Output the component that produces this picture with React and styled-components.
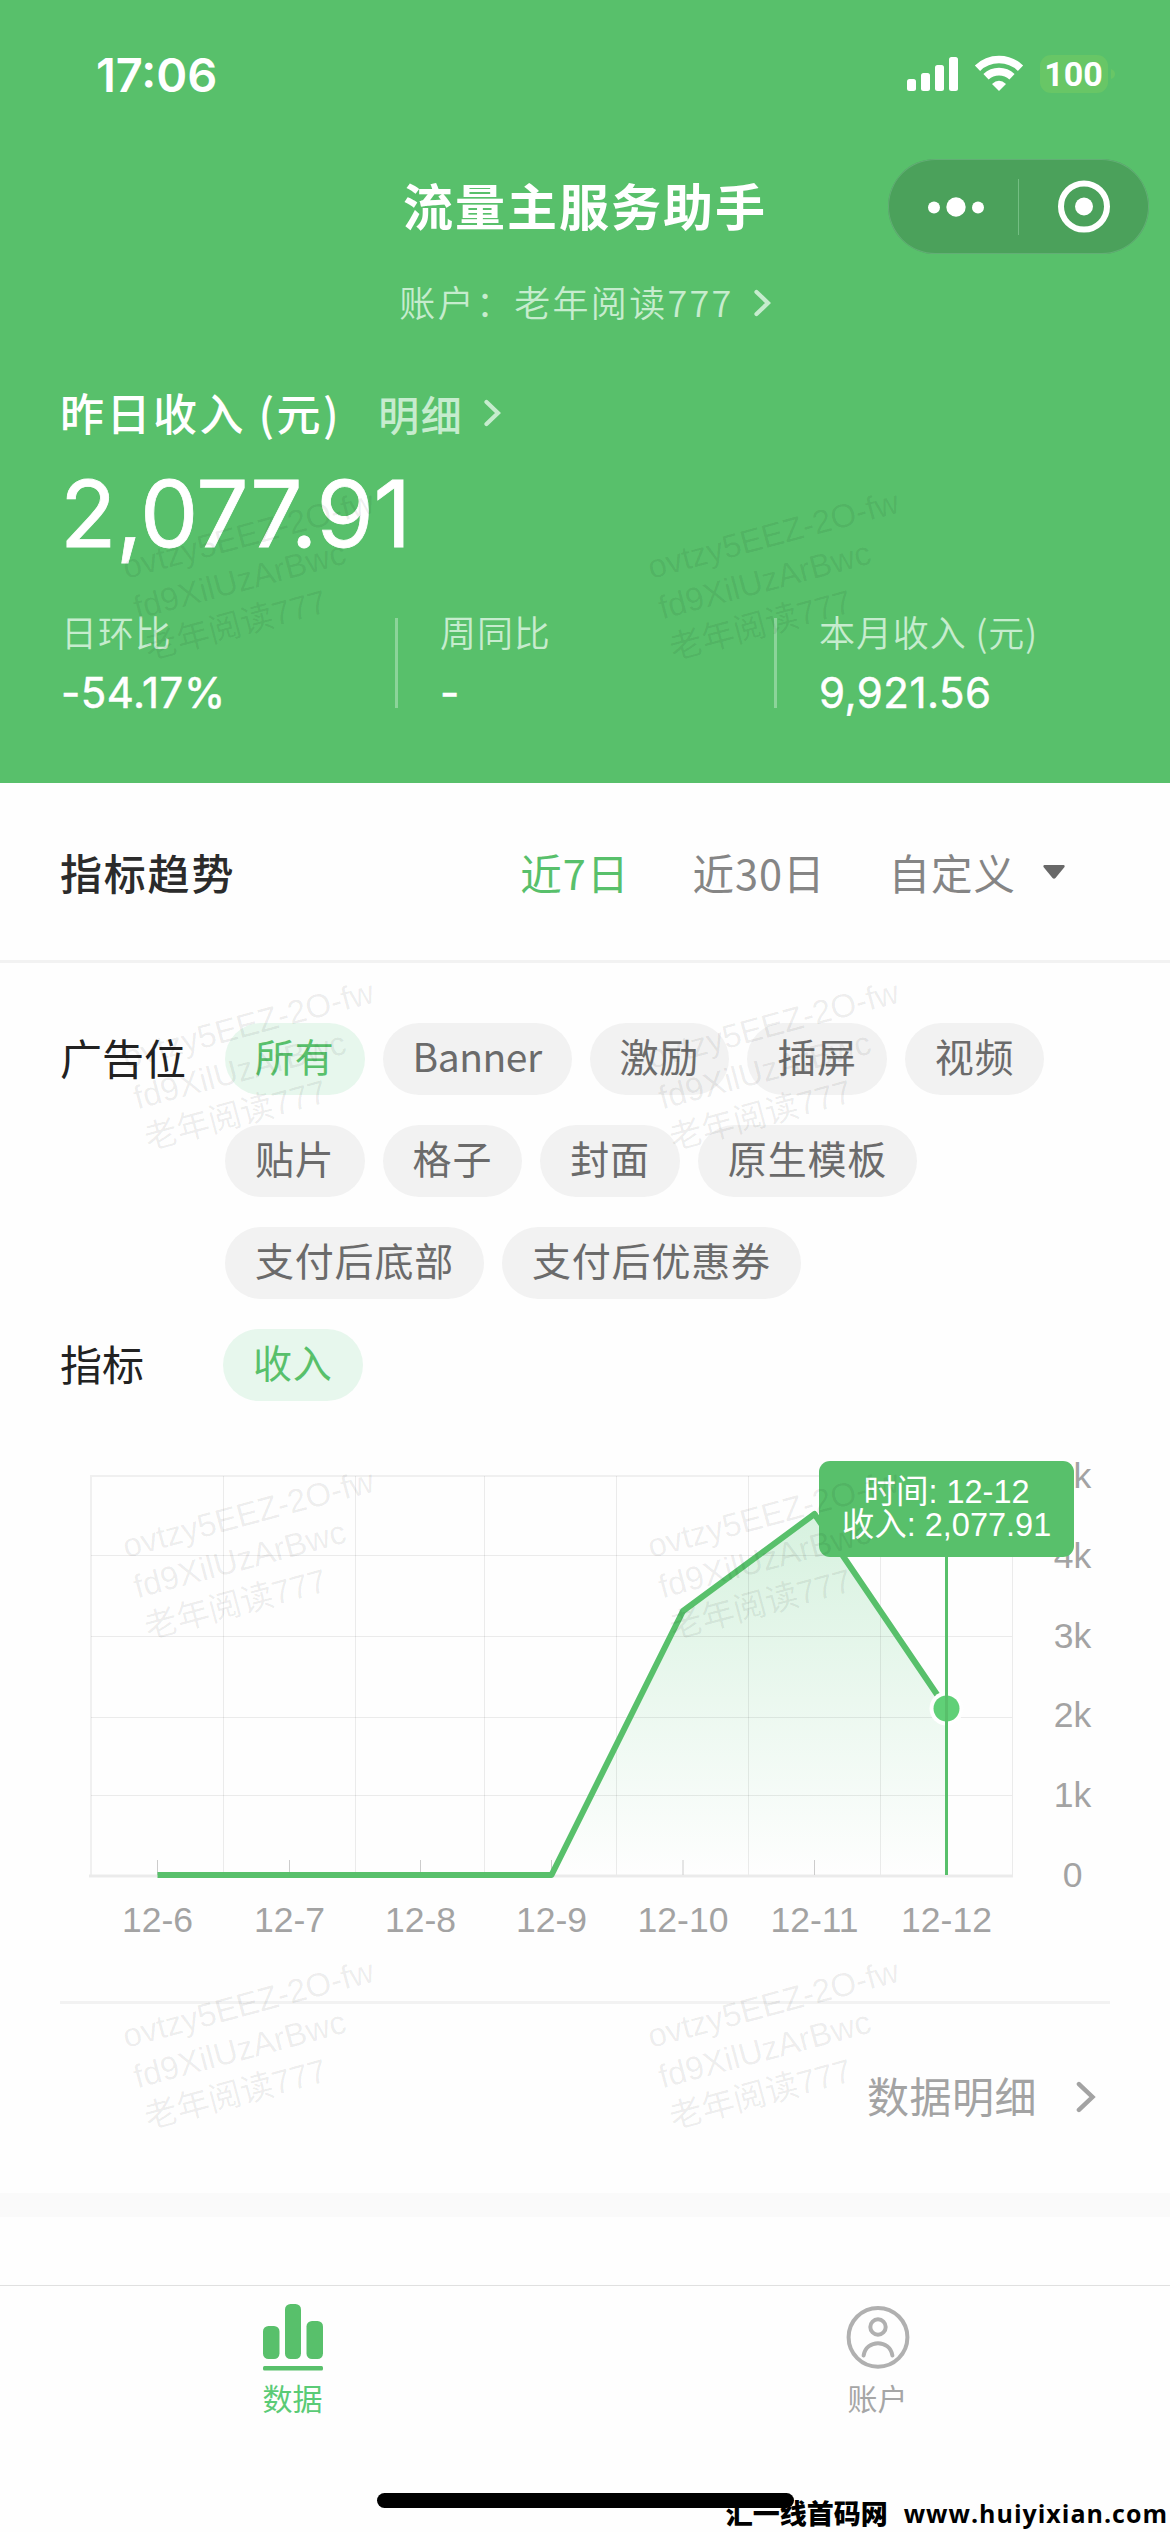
import React from "react";
import styled, { createGlobalStyle } from "styled-components";

const green = "#58c06b";

const adSlots = [
  "所有",
  "Banner",
  "激励",
  "插屏",
  "视频",
  "贴片",
  "格子",
  "封面",
  "原生模板",
  "支付后底部",
  "支付后优惠券",
];

const points = [
  { day: "12-6", x: 157.5, y: 1875 },
  { day: "12-7", x: 289.5, y: 1875 },
  { day: "12-8", x: 420.5, y: 1875 },
  { day: "12-9", x: 551.5, y: 1875 },
  { day: "12-10", x: 683, y: 1611 },
  { day: "12-11", x: 814.5, y: 1514 },
  { day: "12-12", x: 946.5, y: 1708.5 },
];

const yLabels = ["5k", "4k", "3k", "2k", "1k", "0"];
const gridX = [223.5, 355.5, 484.5, 616.5, 748.5, 880.5];
const gridY = [1555.5, 1636.5, 1717.5, 1795.5];

const Chevron = (props) => (
  <svg
    width={props.width}
    height={props.height}
    viewBox="0 0 17 28"
    fill="none"
    stroke="currentColor"
    strokeWidth={props.stroke || 4.2}
    strokeLinecap="round"
  >
    <path d="M2.5 3L14 14L2.5 25" strokeLinejoin="miter" />
  </svg>
);

const StatusIcons = () => (
  <svg width="210" height="38" viewBox="0 0 210 38" fill="white">
    <rect x="0" y="24" width="9" height="12" rx="2.5" />
    <rect x="14" y="18" width="9" height="18" rx="2.5" />
    <rect x="28" y="10" width="9" height="26" rx="2.5" />
    <rect x="42" y="2" width="9" height="34" rx="2.5" />
    <g fill="none" stroke="white" strokeWidth="7.6">
      <path d="M70.5 13.2A31 31 0 0 1 113.5 13.2" />
      <path d="M79 21.8A19 19 0 0 1 105 21.8" />
    </g>
    <path d="M92 36L85 29Q92 22.5 99 29Z" />
    <rect x="133" y="0" width="68" height="38" rx="11" fill="#68c666" />
    <path d="M204 14Q208 15.500 208 19Q208 22.500 204 24Z" fill="#68c666" />
    <text
      x="166.500"
      y="31"
      fontFamily="Roboto, sans-serif"
      fontWeight="700"
      fontSize="34"
      textAnchor="middle"
    >
      100
    </text>
  </svg>
);

const CapsuleIcons = () => (
  <svg width="260" height="95" viewBox="0 0 260 95" fill="white">
    <circle cx="46" cy="48.500" r="6" />
    <circle cx="68" cy="48" r="9.700" />
    <circle cx="90" cy="48.500" r="6" />
    <rect x="130" y="20" width="1" height="56" fill="#74be83" />
    <circle cx="196" cy="47.500" r="9" />
    <circle cx="196" cy="47.500" r="23" fill="none" stroke="white" strokeWidth="6" />
  </svg>
);

const BarsIcon = () => (
  <svg width="60" height="68" viewBox="0 0 60 68" fill={green}>
    <rect x="0" y="22" width="16.5" height="33" rx="5.5" />
    <rect x="22" y="0" width="16" height="55" rx="5.5" />
    <rect x="43.5" y="17" width="16.5" height="38" rx="5.5" />
    <rect x="0" y="62" width="60" height="4.6" rx="1.5" />
  </svg>
);

const AccountIcon = () => (
  <svg width="64" height="68" viewBox="0 0 64 68" fill="none" stroke="#b0b0b0" strokeWidth="4">
    <circle cx="32" cy="33.3" r="29.4" />
    <circle cx="32" cy="23" r="7.7" />
    <path d="M17.6 51.500C20 35 44 35 46.400 51.500" strokeLinecap="round" />
  </svg>
);

const Chart = () => {
  const line = points.map((p) => `${p.x},${p.y}`).join(" ");
  const last = points[points.length - 1];
  return (
    <ChartBox>
      <svg width="1170" height="600" viewBox="0 1401 1170 600">
        <defs>
          <linearGradient id="area" x1="0" y1="0" x2="0" y2="1">
            <stop offset="0" stopColor="#54c878" stopOpacity="0.23" />
            <stop offset="1" stopColor="#54c878" stopOpacity="0" />
          </linearGradient>
        </defs>
        <g fill="none" stroke="#f0f0f0" strokeWidth="2">
          <path d="M91 1877V1476H1012" />
          <path d="M1012.500 1476V1875" stroke="#ebebeb" strokeWidth="1" />
        </g>
        <polygon points={`${line} ${last.x},1875`} fill="url(#area)" />
        <g stroke="#000" strokeOpacity="0.075" strokeWidth="1">
          {gridX.map((x) => (
            <line key={x} x1={x} x2={x} y1="1476" y2="1875" />
          ))}
          {gridY.map((y) => (
            <line key={y} x1="91" x2="1012" y1={y} y2={y} />
          ))}
        </g>
        <rect x="89" y="1874.500" width="924" height="3" fill="#ebebeb" />
        {points.map((p) => (
          <line key={p.day} x1={p.x} x2={p.x} y1="1860" y2="1875" stroke="#ccc" />
        ))}
        <polyline points={line} fill="none" stroke={green} strokeWidth="6" strokeLinejoin="round" />
        <circle cx={last.x} cy={last.y} r="17" fill="white" />
        <circle cx={last.x} cy={last.y} r="13" fill="#60d077" />
        <rect x={last.x - 1.5} y="1540" width="3" height="335" fill={green} />
        <g fill="#a3a3a3" fontFamily="Liberation Sans, Arial, sans-serif" fontSize="35.5" textAnchor="middle">
          {points.map((p) => (
            <text key={p.day} x={p.x} y="1932">
              {p.day}
            </text>
          ))}
          {yLabels.map((label, i) => (
            <text key={label} x="1072.500" y={1488 + i * 79.8}>
              {label}
            </text>
          ))}
        </g>
      </svg>
      <Tooltip>
        <span>时间: 12-12</span>
        <span>收入: 2,077.91</span>
      </Tooltip>
    </ChartBox>
  );
};

const App = () => {
  return (
    <Page>
      <GlobalStyle />
      <Header>
        <StatusBar>
          <Time>17:06</Time>
          <StatusIcons />
        </StatusBar>
        <NavBar>
          <Title>流量主服务助手</Title>
          <Capsule>
            <CapsuleIcons />
          </Capsule>
        </NavBar>
        <Account>
          <span>账户：老年阅读777</span>
          <Chevron width={17} height={28} />
        </Account>
        <IncomeHead>
          <IncomeTitle>昨日收入 (元)</IncomeTitle>
          <IncomeLink>
            明细
            <Chevron width={17} height={28} />
          </IncomeLink>
        </IncomeHead>
        <Amount>2,077.91</Amount>
        <Stats>
          <Stat width="334px">
            <StatLabel>日环比</StatLabel>
            <StatValue>-54.17%</StatValue>
          </Stat>
          <StatDivider />
          <Stat width="376px" indent="42px">
            <StatLabel>周同比</StatLabel>
            <StatValue>-</StatValue>
          </Stat>
          <StatDivider />
          <Stat width="350px" indent="42px">
            <StatLabel>本月收入 (元)</StatLabel>
            <StatValue>9,921.56</StatValue>
          </Stat>
        </Stats>
      </Header>
      <TrendHead>
        <TrendTitle>指标趋势</TrendTitle>
        <Ranges>
          <Range $active>近7日</Range>
          <Range>近30日</Range>
          <Range>
            自定义
            <Caret viewBox="0 0 22 14">
              <path d="M1.500 0H20.500Q22 0 21.500 2L12.500 13Q11 14.500 9.500 13L0.500 2Q0 0 1.500 0Z" />
            </Caret>
          </Range>
        </Ranges>
      </TrendHead>
      <Filters>
        <Filter>
          <FilterLabel width="165px">广告位</FilterLabel>
          <Chips>
            {adSlots.map((name, i) => (
              <Chip key={name} $active={i === 0} $latin={/^\w+$/.test(name)}>
                {name}
              </Chip>
            ))}
          </Chips>
        </Filter>
        <Filter>
          <FilterLabel width="163px">指标</FilterLabel>
          <Chips>
            <Chip $active>收入</Chip>
          </Chips>
        </Filter>
      </Filters>
      <Chart />
      <More>
        <span>数据明细</span>
        <Chevron width={20} height={34} stroke={3.8} />
      </More>
      <Band />
      <TabBar>
        <Tabs>
          <Tab $active>
            <BarsIcon />
            数据
          </Tab>
          <Tab>
            <AccountIcon />
            账户
          </Tab>
        </Tabs>
        <HomeIndicator />
      </TabBar>
      <Watermarks>
        {[...Array(8)].map((_, i) => (
          <MarkTile key={i}>
            <Mark>
              <div>ovtzy5EEZ-2O-fw</div>
              <div>fd9XilUzArBwc</div>
              <div>老年阅读777</div>
            </Mark>
          </MarkTile>
        ))}
      </Watermarks>
      <SiteMark>
        <SiteName>汇一线首码网</SiteName>
        <SiteUrl>www.huiyixian.com</SiteUrl>
      </SiteMark>
    </Page>
  );
};

const GlobalStyle = createGlobalStyle`
  * {
    box-sizing: border-box;
  }
  body {
    margin: 0;
    background: #fefefe;
    font-family: "Noto Sans CJK SC", sans-serif;
  }
  svg {
    display: block;
    flex-shrink: 0;
  }
`;

const Page = styled.div`
  position: relative;
  width: 1170px;
  height: 2532px;
  overflow: hidden;
  display: flex;
  flex-direction: column;
  background: #fefefe;
  white-space: nowrap;
`;
const Header = styled.header`
  height: 783px;
  flex-shrink: 0;
  background: ${green};
  color: white;
`;
const StatusBar = styled.div`
  height: 148px;
  padding: 0 53px 0 96px;
  display: flex;
  align-items: center;
  justify-content: space-between;
`;
const Time = styled.div`
  font: 600 47px Inter, sans-serif;
`;
const NavBar = styled.div`
  height: 117px;
  padding-right: 21px;
  padding-left: 21px;
  display: grid;
  grid-template-columns: 1fr auto 1fr;
  align-items: center;
`;
const Title = styled.h1`
  grid-column: 2;
  margin: 0;
  padding-bottom: 5px;
  font-size: 50px;
  font-weight: 700;
  line-height: 58px;
  letter-spacing: 2px;
`;
const Capsule = styled.div`
  justify-self: end;
  width: 261px;
  height: 95px;
  border-radius: 48px;
  background: #4ba15b;
  box-shadow: inset 0 0 0 1px #62ae75;
`;
const Account = styled.div`
  height: 76px;
  display: flex;
  align-items: center;
  justify-content: center;
  gap: 20px;
  font-size: 36px;
  font-weight: 350;
  letter-spacing: 2.300px;
  color: #c6ecce;

  span {
    padding-bottom: 5px;
  }
`;
const IncomeHead = styled.div`
  height: 60px;
  margin-top: 42px;
  padding-left: 60px;
  display: flex;
  align-items: center;
  gap: 37px;
`;
const IncomeTitle = styled.div`
  padding-bottom: 2px;
  font-size: 44px;
  font-weight: 500;
  line-height: 60px;
  letter-spacing: 2.500px;
`;
const IncomeLink = styled.div`
  display: flex;
  align-items: center;
  gap: 21px;
  font-size: 41px;
  line-height: 60px;
  font-weight: 500;
  letter-spacing: 1.500px;
  color: #c6ecce;
`;
const Amount = styled.div`
  height: 100px;
  margin: 20px 0 0 60px;
  font: 400 92.500px/100px Inter, sans-serif;
  letter-spacing: -0.300px;
  -webkit-text-stroke: 0.8px currentColor;
`;
const Stats = styled.div`
  margin-top: 44px;
  padding-left: 61px;
  display: flex;
  align-items: center;
`;
const Stat = styled.div`
  width: ${(props) => props.width};
  padding-left: ${(props) => props.indent || 0};
`;
const StatLabel = styled.div`
  font-size: 36px;
  font-weight: 350;
  line-height: 48px;
  letter-spacing: 0.900px;
  color: #c6ecce;
`;
const StatValue = styled.div`
  margin-top: 13px;
  font: 400 42px/50px Inter, sans-serif;
  letter-spacing: 0.500px;
  -webkit-text-stroke: 0.5px currentColor;
`;
const StatDivider = styled.div`
  width: 3px;
  height: 90px;
  background: #8cd49a;
`;
const TrendHead = styled.div`
  height: 180px;
  flex-shrink: 0;
  padding: 0 105px 0 60px;
  border-bottom: 3px solid #f2f2f2;
  display: flex;
  align-items: center;
  justify-content: space-between;
`;
const TrendTitle = styled.h2`
  margin: 0;
  font-size: 42px;
  font-weight: 500;
  letter-spacing: 1.800px;
  color: #2b2b2b;
`;
const Ranges = styled.div`
  display: flex;
  gap: 63px;
`;
const Range = styled.div`
  display: flex;
  align-items: center;
  font-size: 41.500px;
  letter-spacing: 1px;
  color: ${(props) => (props.$active ? green : "#858585")};
`;
const Caret = styled.svg`
  width: 22px;
  height: 14px;
  margin-left: 27px;
  fill: #686868;
`;
const Filters = styled.div`
  padding: 60px 0 0 60px;
  display: flex;
  flex-direction: column;
  gap: 30px;
`;
const Filter = styled.div`
  display: flex;
`;
const FilterLabel = styled.div`
  width: ${(props) => props.width};
  flex-shrink: 0;
  font-size: 42px;
  line-height: 68px;
  color: #222;
`;
const Chips = styled.div`
  width: 860px;
  display: flex;
  flex-wrap: wrap;
  gap: 30px 18px;
`;
const Chip = styled.div`
  height: 72px;
  padding: 0 30px;
  border-radius: 36px;
  font-size: 39px;
  line-height: 65px;
  letter-spacing: ${(props) => (props.$latin ? "-0.500px" : "0.800px")};
  color: ${(props) => (props.$active ? green : "#6b6b6b")};
  background: ${(props) => (props.$active ? "#e7f7ed" : "#f2f2f2")};
`;
const ChartBox = styled.div`
  position: relative;
  height: 600px;
  flex-shrink: 0;
`;
const Tooltip = styled.div`
  position: absolute;
  left: 819px;
  top: 60px;
  width: 255px;
  height: 96px;
  border-radius: 11px;
  background: ${green};
  color: white;
  display: flex;
  flex-direction: column;
  align-items: center;
  justify-content: center;
  font: 32.500px/33px "Liberation Sans", "Noto Sans CJK SC", sans-serif;
`;
const More = styled.div`
  height: 192px;
  flex-shrink: 0;
  margin: 0 60px;
  padding: 0 14px 3px 0;
  border-top: 3px solid #f2f2f2;
  display: flex;
  align-items: center;
  justify-content: flex-end;
  gap: 39px;
  font-size: 42px;
  letter-spacing: 0.500px;
  color: #a3a3a3;

  span {
    padding-bottom: 5px;
  }
`;
const Band = styled.div`
  height: 24px;
  flex-shrink: 0;
  background: #fafafa;
`;
const TabBar = styled.nav`
  height: 247px;
  margin-top: auto;
  flex-shrink: 0;
  padding-bottom: 24px;
  border-top: 1px solid #e0e0e0;
  display: flex;
  flex-direction: column;
  align-items: center;
  justify-content: space-between;
`;
const Tabs = styled.div`
  width: 100%;
  padding-top: 18px;
  display: grid;
  grid-template-columns: 1fr 1fr;
`;
const Tab = styled.div`
  display: flex;
  flex-direction: column;
  align-items: center;
  gap: 5px;
  font-size: 30px;
  line-height: 40px;
  color: ${(props) => (props.$active ? "#5acb76" : "#a6a6a6")};
`;
const HomeIndicator = styled.div`
  width: 417px;
  height: 15px;
  border-radius: 8px;
  background: black;
`;
const Watermarks = styled.div`
  position: absolute;
  top: 497px;
  left: 60px;
  display: grid;
  grid-template-columns: repeat(2, 525px);
  grid-auto-rows: 489.500px;
  pointer-events: none;
`;
const MarkTile = styled.div`
  padding: 51px 0 0 58px;
`;
const Mark = styled.div`
  width: 300px;
  transform: rotate(-15deg);
  transform-origin: top left;
  font: 33px/42px "Liberation Sans", "Noto Sans CJK SC", sans-serif;
  color: rgba(0, 0, 0, 0.07);
`;
const SiteMark = styled.div`
  position: absolute;
  right: 2px;
  bottom: 1px;
  display: flex;
  align-items: center;
  gap: 16px;
  line-height: 36px;
  color: black;
`;
const SiteName = styled.span`
  font-size: 27px;
  font-weight: 900;
`;
const SiteUrl = styled.span`
  font: 700 25px/36px "Open Sans", sans-serif;
  letter-spacing: 1px;
`;

export default App;
